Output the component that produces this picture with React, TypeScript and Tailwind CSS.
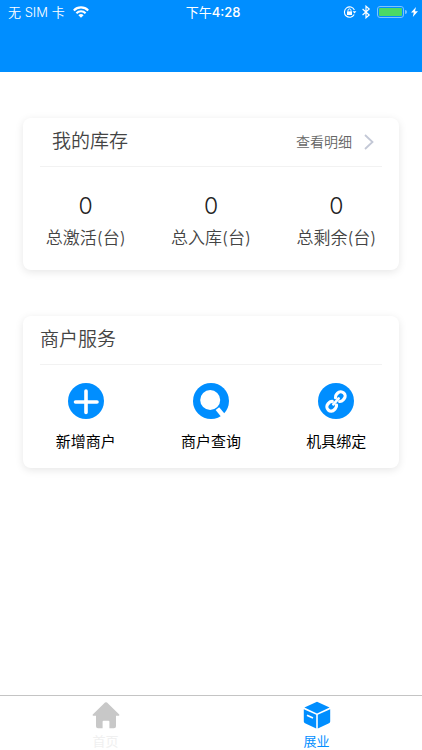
import type { ReactNode } from 'react';

interface StockItem {
  label: string;
  value: number;
}

interface ServiceItem {
  label: string;
  icon: ReactNode;
}

const stockItems: StockItem[] = [
  { label: '总激活(台)', value: 0 },
  { label: '总入库(台)', value: 0 },
  { label: '总剩余(台)', value: 0 }
];

function PlusIcon() {
  return (
    <svg viewBox="0 0 36 36" className="w-9 h-9" aria-hidden="true">
      <circle cx="18" cy="18" r="18" fill="#008eff" />
      <path d="M18 8v21.5M7.5 19h21.5" stroke="#fff" strokeWidth="3.6" strokeLinecap="round" />
    </svg>
  );
}

function SearchIcon() {
  return (
    <svg viewBox="0 0 36 36" className="w-9 h-9" aria-hidden="true">
      <circle cx="18" cy="18" r="18" fill="#008eff" />
      <circle cx="17.2" cy="17" r="10" fill="#fff" />
      <path d="M24.4 25.6L30.5 33" stroke="#fff" strokeWidth="4.6" />
    </svg>
  );
}

function LinkIcon() {
  return (
    <svg viewBox="0 0 36 36" className="w-9 h-9" aria-hidden="true">
      <circle cx="18" cy="18" r="18" fill="#008eff" />
      <g transform="translate(18 18.4) rotate(-48)" fill="none" stroke="#fff" strokeWidth="3.2" strokeLinecap="round">
        <path d="M2.4 -2.800a4.200 4.200 0 0 1 3.400-1.500h1.400a4.300 4.300 0 0 1 0 8.600h-1.400a4.200 4.200 0 0 1-3.400-1.500" />
        <path d="M-2.400 2.800a4.200 4.200 0 0 1-3.400 1.500h-1.400a4.300 4.300 0 0 1 0-8.600h1.400a4.200 4.200 0 0 1 3.400 1.500" />
        <path d="M-4 0h8" strokeWidth="2.6" />
      </g>
    </svg>
  );
}

const serviceItems: ServiceItem[] = [
  { label: '新增商户', icon: <PlusIcon /> },
  { label: '商户查询', icon: <SearchIcon /> },
  { label: '机具绑定', icon: <LinkIcon /> }
];

function StatusBar() {
  return (
    <div className="grid grid-cols-3 items-center h-6 pl-2 pr-1 text-[13px] leading-6 text-white">
      <div className="flex items-center gap-2">
        <span className="font-[350]">无 SIM 卡</span>
        <svg viewBox="0 0 16 12" className="w-4 h-3" fill="none" stroke="#fff" strokeWidth="2.1" aria-hidden="true">
          <path d="M.8 4.4a10.2 10.2 0 0 1 14.4 0" />
          <path d="M3.4 7.2a6.5 6.5 0 0 1 9.2 0" />
          <path d="M8 11.8L5.4 9.2a3.7 3.7 0 0 1 5.2 0z" fill="#fff" stroke="none" />
        </svg>
      </div>
      <div className="text-center">
        下午<span className="font-medium">4:28</span>
      </div>
      <div className="flex items-center justify-end gap-1">
        <svg viewBox="0 0 14 12" className="w-3.5 h-3" fill="none" stroke="#fff" aria-hidden="true">
          <path d="M11.2 8.6A5.2 5.2 0 1 1 11.4 4" strokeWidth="1.1" />
          <path d="M9.6 5.2h3.8l-1.9 2.4z" fill="#fff" stroke="none" />
          <rect x="4" y="5.4" width="5" height="3.6" fill="#fff" stroke="none" />
          <path d="M5 5.6V4.4a1.5 1.5 0 0 1 3 0v1.2" strokeWidth="1" />
        </svg>
        <svg viewBox="0 0 10 14" className="w-2.5 h-3.5" fill="none" stroke="#fff" strokeWidth="1.2" aria-hidden="true">
          <path d="M1.6 4l6.6 6L5 12.8V1.2L8.2 4l-6.6 6" />
        </svg>
        <svg viewBox="0 0 30 12" className="w-[30px] h-3 ml-0.5" aria-hidden="true">
          <rect x=".5" y=".5" width="26" height="11" rx="2.5" fill="none" stroke="#7cc4ff" />
          <rect x="2" y="2" width="23" height="8" rx="1" fill="#4cd964" />
          <path d="M28 4v4a2 2 0 0 0 0-4z" fill="#7cc4ff" />
        </svg>
        <svg viewBox="0 0 7 10" className="w-[7px] h-2.5" fill="#fff" aria-hidden="true">
          <path d="M5 0L0 5.6h2.8L1.8 10 7 4.2H4z" />
        </svg>
      </div>
    </div>
  );
}

export default function App() {
  return (
    <div className="flex flex-col min-h-screen bg-white font-['Inter','Noto_Sans_CJK_SC',sans-serif]">
      <header className="h-[72px] bg-[#008eff]">
        <StatusBar />
      </header>

      <main className="flex-1 flex flex-col gap-[46px] px-[23px] pt-[46px] pb-6">
        {/* Stock summary */}
        <section className="rounded-lg bg-white pb-5 shadow-[0_2px_8px_rgba(0,0,0,0.10)]">
          <div className="flex items-center justify-between h-[49px] mx-[17px] pl-3 pr-2 border-b border-[#f2f2f2]">
            <h2 className="text-[19px] font-[350] text-[#444]">我的库存</h2>
            <a href="#detail" className="flex items-center gap-3 text-sm font-[350] text-[#666]">
              查看明细
              <svg viewBox="0 0 10 16" className="w-2.5 h-4" fill="none" stroke="#c3c8d6" strokeWidth="1.8" aria-hidden="true">
                <path d="M1 1l7.5 7L1 15" />
              </svg>
            </a>
          </div>
          <dl className="grid grid-cols-3 pt-[23px] text-center">
            {stockItems.map((item) => (
              <div key={item.label} className="flex flex-col-reverse gap-1">
                <dt className="text-[17px] leading-6 font-[350] text-[#444]">{item.label}</dt>
                <dd className="text-[23px] leading-8 font-light text-[#222]">{item.value}</dd>
              </div>
            ))}
          </dl>
        </section>

        {/* Merchant services */}
        <section className="rounded-lg bg-white pb-[14px] shadow-[0_2px_8px_rgba(0,0,0,0.10)]">
          <div className="flex items-center h-[49px] mx-[17px] border-b border-[#f2f2f2]">
            <h2 className="text-[19px] font-[350] text-[#444]">商户服务</h2>
          </div>
          <div className="grid grid-cols-3 pt-[18px]">
            {serviceItems.map((item) => (
              <button key={item.label} type="button" className="flex flex-col items-center gap-[11px]">
                {item.icon}
                <span className="text-[15px] leading-6 text-black">{item.label}</span>
              </button>
            ))}
          </div>
        </section>
      </main>

      <nav className="grid grid-cols-2 border-t border-[#c4c4c4] pt-[5px] pb-px text-[13px] leading-4">
        <a href="#home" className="flex flex-col items-center gap-1 text-[#f0f0f0]">
          <svg viewBox="0 0 28 28" className="w-7 h-7" fill="#c8c8c8" aria-hidden="true">
            <path d="M13 1.6a1.5 1.5 0 0 1 2 0L27 13.2c.7.7.4 1.6-.6 1.6H24v10.4a2 2 0 0 1-2 2h-4.6v-6.4a1 1 0 0 0-1-1h-4.8a1 1 0 0 0-1 1v6.4H6a2 2 0 0 1-2-2V14.8H1.6c-1 0-1.3-.9-.6-1.6z" />
          </svg>
          首页
        </a>
        <a href="#business" aria-current="page" className="flex flex-col items-center gap-1 text-[#008eff]">
          <svg viewBox="0 0 28 28" className="w-7 h-7" fill="#008eff" aria-hidden="true">
            <path d="M14 .8L26.6 6.6 14 12.4 1.4 6.6z" />
            <path d="M.8 8.2L13.2 13.8V27.4L2 22.2a2 2 0 0 1-1.2-1.8z" />
            <path d="M27.2 8.2L14.8 13.8V27.4L26 22.2a2 2 0 0 0 1.2-1.8z" />
            <path d="M4 14.2l6 2.8" stroke="#fff" strokeWidth="1.6" />
          </svg>
          展业
        </a>
      </nav>
    </div>
  );
}
